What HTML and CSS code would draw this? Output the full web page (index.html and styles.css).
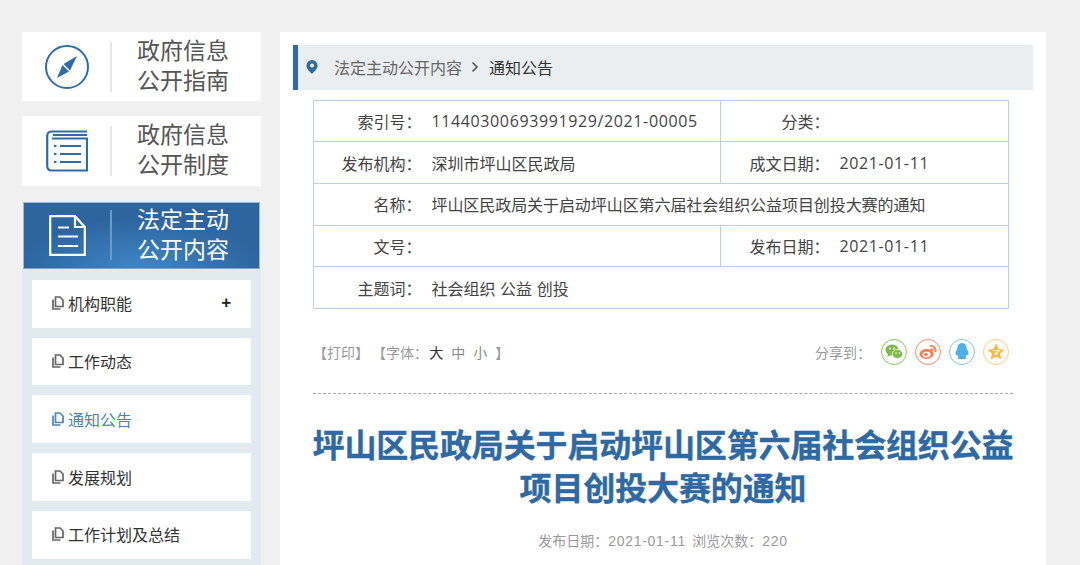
FILE: index.html
```html
<!DOCTYPE html>
<html lang="zh-CN">
<head>
<meta charset="utf-8">
<title>通知公告</title>
<link rel="stylesheet" href="styles.css">
</head>
<body>
<aside class="side">
  <a class="card">
    <span class="card-icon">
      <svg width="46" height="46" viewBox="0 0 46 46"><circle cx="23" cy="23" r="21" fill="none" stroke="#2f6ca5" stroke-width="2"/><path d="M33 12 L26 26.500 L19.500 20 Z" fill="#2f6ca5"/><path d="M13 34 L18.500 21 L25 27.500 Z" fill="#2f6ca5"/></svg>
    </span>
    <span class="card-text">政府信息<br>公开指南</span>
  </a>
  <a class="card">
    <span class="card-icon">
      <svg width="42" height="42" viewBox="0 0 42 42"><path d="M41 1.500 H6 Q1.200 1.500 1.200 6 V36 Q1.200 40.500 6 40.500 H41 V8.500 H6" fill="none" stroke="#2f6ca5" stroke-width="2.200"/><path d="M7 5 H41" stroke="#2f6ca5" stroke-width="2"/><path d="M14 16 H35 M14 24 H35 M14 32 H35" stroke="#2f6ca5" stroke-width="2.200"/><path d="M8 16 H10.500 M8 24 H10.500 M8 32 H10.500" stroke="#2f6ca5" stroke-width="2.200"/></svg>
    </span>
    <span class="card-text">政府信息<br>公开制度</span>
  </a>
  <a class="card card-active">
    <span class="card-icon">
      <svg width="37" height="41" viewBox="0 0 37 41"><path d="M1.200 1.200 H26 L35.800 12 V39.800 H1.200 Z M26 1.200 V12 H35.800" fill="none" stroke="#fff" stroke-width="2.200"/><path d="M9 12.500 H20 M9 21.500 H29 M9 31 H29" stroke="#fff" stroke-width="2.200"/></svg>
    </span>
    <span class="card-text">法定主动<br>公开内容</span>
  </a>
  <ul class="menu">
    <li class="menu-item"><svg class="copy" width="12" height="14" viewBox="0 0 12 14"><path d="M3.500 3.500 V1 H8 L11 4 V10.500 H3.500 Z M1 3.500 V13 H8.500" fill="none" stroke="currentColor" stroke-width="1.700"/></svg><span>机构职能</span><b class="plus">+</b></li>
    <li class="menu-item"><svg class="copy" width="12" height="14" viewBox="0 0 12 14"><path d="M3.500 3.500 V1 H8 L11 4 V10.500 H3.500 Z M1 3.500 V13 H8.500" fill="none" stroke="currentColor" stroke-width="1.700"/></svg><span>工作动态</span></li>
    <li class="menu-item menu-on"><svg class="copy" width="12" height="14" viewBox="0 0 12 14"><path d="M3.500 3.500 V1 H8 L11 4 V10.500 H3.500 Z M1 3.500 V13 H8.500" fill="none" stroke="currentColor" stroke-width="1.700"/></svg><span>通知公告</span></li>
    <li class="menu-item"><svg class="copy" width="12" height="14" viewBox="0 0 12 14"><path d="M3.500 3.500 V1 H8 L11 4 V10.500 H3.500 Z M1 3.500 V13 H8.500" fill="none" stroke="currentColor" stroke-width="1.700"/></svg><span>发展规划</span></li>
    <li class="menu-item"><svg class="copy" width="12" height="14" viewBox="0 0 12 14"><path d="M3.500 3.500 V1 H8 L11 4 V10.500 H3.500 Z M1 3.500 V13 H8.500" fill="none" stroke="currentColor" stroke-width="1.700"/></svg><span>工作计划及总结</span></li>
  </ul>
</aside>
<main class="main">
  <nav class="crumb">
    <svg class="pin" width="12" height="14" viewBox="0 0 12 14"><path fill-rule="evenodd" d="M6 0 A5.600 5.600 0 0 1 11.600 5.600 C11.600 9 8 12 6 14 C4 12 .4 9 .4 5.600 A5.600 5.600 0 0 1 6 0 Z M6 3.600 A2 2 0 1 0 6 7.600 A2 2 0 1 0 6 3.600 Z" fill="#2f6ca5"/></svg>
    <span class="crumb-a">法定主动公开内容</span>
    <svg class="chev" width="8" height="12" viewBox="0 0 8 12"><path d="M1.500 1.500 L6 6 L1.500 10.500" fill="none" stroke="#555" stroke-width="1.600"/></svg>
    <span class="crumb-b">通知公告</span>
  </nav>
  <table class="info">
    <colgroup><col class="c1"><col class="c2"><col class="c3"><col class="c4"></colgroup>
    <tr><th>索引号：</th><td class="divide num">11440300693991929/2021-00005</td><th>分类：</th><td></td></tr>
    <tr><th>发布机构：</th><td class="divide">深圳市坪山区民政局</td><th>成文日期：</th><td class="num">2021-01-11</td></tr>
    <tr><th>名称：</th><td colspan="3" class="tight">坪山区民政局关于启动坪山区第六届社会组织公益项目创投大赛的通知</td></tr>
    <tr><th>文号：</th><td class="divide"></td><th>发布日期：</th><td class="num">2021-01-11</td></tr>
    <tr><th>主题词：</th><td colspan="3" class="words">社会组织 公益 创投</td></tr>
  </table>
  <div class="tools">
    <div class="tools-left">【打印】 【字体：<span class="dark">大</span><span class="size">中</span><span class="size">小</span>】</div>
    <div class="share">
      <span class="share-label">分享到：</span>
      <span class="ico ico-wx"><svg width="18" height="16" viewBox="0 0 18 16"><ellipse cx="7" cy="6" rx="6.500" ry="5.500" fill="#7dbb48"/><path d="M3 9 L2.500 13 L7 10 Z" fill="#7dbb48"/><ellipse cx="12.500" cy="10" rx="5.200" ry="4.500" fill="#7dbb48" stroke="#fff" stroke-width=".8"/><circle cx="5" cy="4.500" r="1" fill="#fff"/><circle cx="9" cy="4.500" r="1" fill="#fff"/><circle cx="11" cy="9" r=".8" fill="#fff"/><circle cx="14.500" cy="9" r=".8" fill="#fff"/></svg></span>
      <span class="ico ico-wb"><svg width="18" height="16" viewBox="0 0 18 16"><ellipse cx="7.500" cy="10" rx="7" ry="5" fill="#ff7a4d"/><ellipse cx="7.500" cy="10.500" rx="4" ry="3" fill="#fff"/><circle cx="7" cy="10.500" r="1.800" fill="#ff7a4d"/><path d="M11 2 A5 5 0 0 1 16.500 8" fill="none" stroke="#ff7a4d" stroke-width="1.800"/><path d="M11.500 5 A2.500 2.500 0 0 1 14 7.500" fill="none" stroke="#ff7a4d" stroke-width="1.400"/></svg></span>
      <span class="ico ico-qq"><svg width="16" height="17" viewBox="0 0 16 17"><path d="M8 0 C12 0 12.800 4 12.800 6 C14.500 8.500 15 11 14 12.500 L12.800 11.500 C12.500 13 12 13.500 11.500 14 C13 15 12 16.500 10 16 L6 16 C4 16.500 3 15 4.500 14 C4 13.500 3.500 13 3.200 11.500 L2 12.500 C1 11 1.500 8.500 3.200 6 C3.200 4 4 0 8 0 Z" fill="#4fb0e8"/></svg></span>
      <span class="ico ico-st"><svg width="18" height="17" viewBox="0 0 18 17"><path d="M9 .5 L11.500 6 L17.500 6.700 L13 10.800 L14.300 16.500 L9 13.600 L3.700 16.500 L5 10.800 L.5 6.700 L6.500 6 Z" fill="#ffb73d"/><path d="M6 7.500 H12 L8 11 H11" fill="none" stroke="#fff" stroke-width="1.200"/></svg></span>
    </div>
  </div>
  <article class="article">
    <h1 class="title">坪山区民政局关于启动坪山区第六届社会组织公益项目创投大赛的通知</h1>
    <p class="meta">发布日期：<span class="meta-num">2021-01-11</span>&nbsp;&nbsp;浏览次数：<span class="meta-num">220</span></p>
  </article>
</main>
</body>
</html>
```
FILE: styles.css
```css
* { box-sizing: border-box; }
html, body { margin: 0; height: 565px; overflow: hidden; }
body {
  display: flex;
  align-items: flex-start;
  gap: 19.300px;
  padding: 32px 0 0 22px;
  background: #f0f0f0;
  font-family: "Noto Sans CJK SC", "Noto Sans", sans-serif;
  color: #333;
}
.side { width: 238.700px; flex: none; }
.card {
  display: flex;
  align-items: center;
  height: 69.300px;
  margin-bottom: 15px;
  background: #fff;
  color: #555;
}
.card-icon {
  width: 90px;
  height: 50px;
  flex: none;
  display: flex;
  align-items: center;
  justify-content: center;
  padding-left: 1px;
  border-right: 2px solid #e6e6e6;
}
.card-text {
  margin-left: 25px;
  padding-bottom: 5px;
  font-size: 23px;
  line-height: 30px;
}
.card-active {
  width: 237px;
  height: 67.400px;
  margin: 16px 0 0 1px;
  border: 1px solid #9dbcd9;
  border-bottom-color: #7fa7cc;
  background: radial-gradient(ellipse 120px 50px at 50% 100%, #3f86c6 0%, #2d659f 100%);
  color: #fff;
}
.card-active .card-icon { width: 88px; border-right-color: #6e9ac4; }
.card-active .card-text { padding-bottom: 4px; }
.menu {
  list-style: none;
  margin: 0;
  padding: 11px 9.500px 10px 10px;
  background: #e0eaef;
}
.menu-item {
  display: flex;
  align-items: center;
  height: 47.750px;
  margin-bottom: 10px;
  padding: 0 0 1px 20px;
  background: #fff;
  font-size: 16px;
  color: #333;
}
.copy { margin-right: 4px; color: #666; flex: none; }
.menu-on, .menu-on .copy { color: #4a84b8; }
.plus {
  margin-left: auto;
  margin-right: 20px;
  font-size: 17px;
  font-weight: 700;
  font-family: "Liberation Sans", sans-serif;
  color: #222;
}
.main {
  width: 766px;
  height: 533px;
  flex: none;
  padding: 13px 13px 0;
  background: #fff;
}
.crumb {
  display: flex;
  align-items: center;
  height: 44.500px;
  border-left: 5px solid #2f6ca5;
  background: #ebeef1;
  font-size: 16px;
}
.pin { margin-left: 8px; }
.crumb-a { margin-left: 16px; color: #666; }
.chev { margin: 0 10px 0 9px; }
.crumb-b { color: #333; }
.info {
  width: 696px;
  margin: 10px 0 0 20px;
  border-collapse: collapse;
  table-layout: fixed;
  font-size: 16px;
}
.c1 { width: 118px; }
.c3 { width: 119px; }
.c2 { width: 289px; }
.info tr { height: 41.700px; border: 1px solid #b7d0e8; }
.info th { padding: 0 10px 0 0; text-align: right; font-weight: 400; color: #444; }
.info td { padding: 0; color: #444; }
.info .divide { border-right: 1px solid #b7d0e8; }
.tight { letter-spacing: -.07px; }
.words { word-spacing: 1px; }
.num { font-family: "Open Sans", sans-serif; letter-spacing: .62px; }
.tools {
  display: flex;
  justify-content: space-between;
  align-items: center;
  width: 700px;
  height: 85px;
  margin-left: 20px;
  padding-top: 2px;
  border-bottom: 1px dashed #aaa;
  color: #999;
  font-size: 14px;
}
.tools-left { white-space: pre; }
.dark { color: #333; margin: 0 8px 0 1px; }
.size { color: #888; margin-right: 8px; }
.share { display: flex; align-items: center; gap: 8px; margin-right: 4px; }
.share-label { margin-right: 2px; }
.ico {
  display: flex;
  align-items: center;
  justify-content: center;
  width: 26px;
  height: 26px;
  border: 1px solid;
  border-radius: 50%;
}
.ico-wx { border-color: #8cc65f; }
.ico-wb { border-color: #ff8a63; }
.ico-qq { border-color: #7fc6ef; }
.ico-st { border-color: #ffcb73; }
.article { width: 704px; margin-left: 18px; text-align: center; }
.title {
  margin: 28px 0 0;
  font-size: 32px;
  line-height: 43.500px;
  font-weight: 700;
  letter-spacing: -.14px;
  color: #2f69a3;
  -webkit-text-stroke: .4px #2f69a3;
}
.meta { margin: 21px 0 0; font-size: 14px; color: #999; }
.meta-num { font-family: "Liberation Sans", sans-serif; letter-spacing: .7px; }
```
